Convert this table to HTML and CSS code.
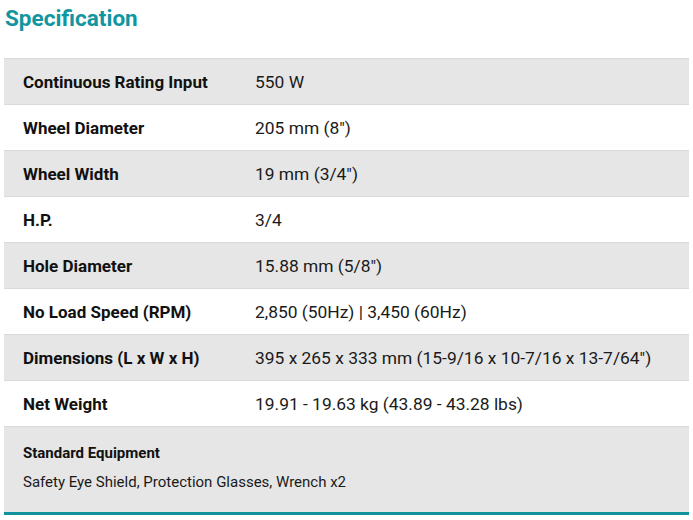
FILE: index.html
```html
<!DOCTYPE html>
<html lang="en">
<head>
<meta charset="utf-8">
<title>Specification</title>
<link rel="stylesheet" href="styles.css">
</head>
<body>
<section class="spec">
  <h2 class="spec-title">Specification</h2>
  <div class="spec-table">
    <div class="row shade"><div class="label">Continuous Rating Input</div><div class="value">550 W</div></div>
    <div class="row"><div class="label">Wheel Diameter</div><div class="value">205 mm (8")</div></div>
    <div class="row shade"><div class="label">Wheel Width</div><div class="value">19 mm (3/4")</div></div>
    <div class="row"><div class="label">H.P.</div><div class="value">3/4</div></div>
    <div class="row shade"><div class="label">Hole Diameter</div><div class="value">15.88 mm (5/8")</div></div>
    <div class="row"><div class="label">No Load Speed (RPM)</div><div class="value">2,850 (50Hz) | 3,450 (60Hz)</div></div>
    <div class="row shade"><div class="label">Dimensions (L x W x H)</div><div class="value">395 x 265 x 333 mm (15-9/16 x 10-7/16 x 13-7/64")</div></div>
    <div class="row"><div class="label">Net Weight</div><div class="value">19.91 - 19.63 kg (43.89 - 43.28 lbs)</div></div>
    <div class="equip shade">
      <div class="equip-title">Standard Equipment</div>
      <div class="equip-text">Safety Eye Shield, Protection Glasses, Wrench x2</div>
    </div>
  </div>
</section>
</body>
</html>
```
FILE: styles.css
```css
html, body {
  margin: 0;
  padding: 0;
  background: #ffffff;
}
body {
  font-family: Roboto, "Liberation Sans", sans-serif;
  color: #151515;
}
.spec {
  width: 685px;
  padding: 4px 0 0 4px;
}
.spec-title {
  margin: 0 0 0 1px;
  font-size: 22.5px;
  line-height: 28px;
  font-weight: 700;
  color: #1196a0;
  height: 54px;
}
.spec-table {
  display: flex;
  flex-direction: column;
  border-bottom: 3px solid #0f939c;
}
.row {
  display: grid;
  grid-template-columns: 232px 1fr;
  height: 45px;
  border-top: 1px solid #dadada;
  align-items: center;
  font-size: 17px;
}
.shade {
  background: #e6e6e6;
}
.label {
  padding-left: 19px;
  font-weight: 700;
  color: #111111;
}
.value {
  padding-left: 19px;
  font-weight: 400;
  color: #1a1a1a;
  font-size: 17.4px;
}
.equip {
  border-top: 1px solid #dadada;
  height: 86px;
  padding: 16px 19px 0 19px;
  box-sizing: border-box;
  font-size: 15px;
}
.equip-title {
  font-weight: 700;
  line-height: 20px;
  color: #111111;
}
.equip-text {
  margin-top: 9px;
  line-height: 20px;
  color: #1a1a1a;
}
```
